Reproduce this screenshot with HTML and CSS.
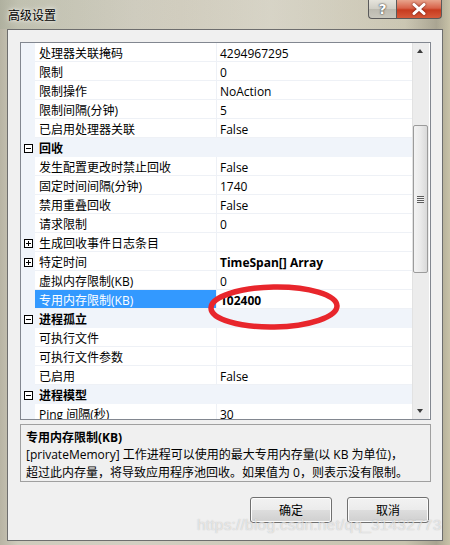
FILE: index.html
```html
<!DOCTYPE html>
<html>
<head>
<meta charset="utf-8">
<link rel="stylesheet" href="styles.css">
</head>
<body>
<div class="window">
  <div class="titlebar">
    <div class="title">高级设置</div>
    <div class="caption-btns">
      <div class="cbtn help">?</div>
      <div class="cbtn close">
        <svg width="16" height="12" viewBox="0 0 16 12"><path d="M3 1.5 L13 10.5 M13 1.5 L3 10.5" stroke="#fff" stroke-width="3" stroke-linecap="round"/><path d="M3 1.5 L13 10.5 M13 1.5 L3 10.5" stroke="#fff" stroke-width="2.2"/></svg>
      </div>
    </div>
  </div>
  <div class="client">
    <div class="grid">
      <div class="rows">
        <div class="row"><div class="gutter"></div><div class="name">处理器关联掩码</div><div class="value">4294967295</div></div>
        <div class="row"><div class="gutter"></div><div class="name">限制</div><div class="value">0</div></div>
        <div class="row"><div class="gutter"></div><div class="name">限制操作</div><div class="value">NoAction</div></div>
        <div class="row"><div class="gutter"></div><div class="name">限制间隔(分钟)</div><div class="value">5</div></div>
        <div class="row"><div class="gutter"></div><div class="name">已启用处理器关联</div><div class="value">False</div></div>
        <div class="row cat"><div class="gutter"><span class="box minus"></span></div><div class="cname">回收</div></div>
        <div class="row"><div class="gutter"></div><div class="name">发生配置更改时禁止回收</div><div class="value">False</div></div>
        <div class="row"><div class="gutter"></div><div class="name">固定时间间隔(分钟)</div><div class="value">1740</div></div>
        <div class="row"><div class="gutter"></div><div class="name">禁用重叠回收</div><div class="value">False</div></div>
        <div class="row"><div class="gutter"></div><div class="name">请求限制</div><div class="value">0</div></div>
        <div class="row"><div class="gutter"><span class="box plus"></span></div><div class="name">生成回收事件日志条目</div><div class="value"></div></div>
        <div class="row"><div class="gutter"><span class="box plus"></span></div><div class="name">特定时间</div><div class="value bold">TimeSpan[] Array</div></div>
        <div class="row"><div class="gutter"></div><div class="name">虚拟内存限制(KB)</div><div class="value">0</div></div>
        <div class="row"><div class="gutter"></div><div class="name selected">专用内存限制(KB)</div><div class="value bold">102400</div></div>
        <div class="row cat"><div class="gutter"><span class="box minus"></span></div><div class="cname">进程孤立</div></div>
        <div class="row"><div class="gutter"></div><div class="name">可执行文件</div><div class="value"></div></div>
        <div class="row"><div class="gutter"></div><div class="name">可执行文件参数</div><div class="value"></div></div>
        <div class="row"><div class="gutter"></div><div class="name">已启用</div><div class="value">False</div></div>
        <div class="row cat"><div class="gutter"><span class="box minus"></span></div><div class="cname">进程模型</div></div>
        <div class="row"><div class="gutter"></div><div class="name">Ping 间隔(秒)</div><div class="value">30</div></div>
        <svg class="ellipse" width="140" height="54" viewBox="0 0 140 54"><ellipse cx="70" cy="27" rx="63" ry="20" fill="none" stroke="#e8262c" stroke-width="5.5" transform="rotate(-1 70 27)"/></svg>
      </div>
      <div class="scrollbar">
        <div class="arrow up"></div>
        <div class="track">
          <div class="thumb"><div class="grip"></div></div>
        </div>
        <div class="arrow down"></div>
      </div>
    </div>
    <div class="desc">
      <div class="desc-title">专用内存限制(KB)</div>
      <div class="desc-text">[privateMemory] 工作进程可以使用的最大专用内存量(以 KB 为单位)，<br>超过此内存量，将导致应用程序池回收。如果值为 0，则表示没有限制。</div>
    </div>
    <div class="buttons">
      <div class="btn">确定</div>
      <div class="btn">取消</div>
    </div>
  </div>
  <div class="watermark">https://blog.csdn.net/qq_31432773</div>
</div>
</body>
</html>
```
FILE: styles.css
```css
* { box-sizing: border-box; }
html, body { margin: 0; padding: 0; }
body {
  width: 450px; height: 545px; overflow: hidden;
  font-family: "Open Sans", "Noto Sans CJK SC", sans-serif;
  font-size: 12px; color: #000;
}
.window {
  position: relative;
  width: 450px; height: 545px;
  padding: 0 7px 4px 7px;
  display: flex; flex-direction: column;
  background: linear-gradient(90deg, #b8b4a4 0%, #cfcbbc 4%, #d3cfc2 30%, #cdc9b8 60%, #c8c3ae 90%, #a8a390 97%, #c8c2a8 100%);
}
.titlebar {
  height: 29px; flex: none;
  display: flex; justify-content: space-between; align-items: flex-start;
  background: linear-gradient(90deg, rgba(160,170,150,0.35) 0%, rgba(200,196,180,0) 40%, rgba(230,228,220,0.4) 60%, rgba(200,196,180,0) 100%);
  margin: 0 -7px; padding: 0 8px 0 8px;
}
.title {
  margin-top: 8px; font-size: 12px; line-height: 16px; color: #000;
  text-shadow: 0 0 6px rgba(255,255,255,0.9), 0 0 3px rgba(255,255,255,0.8);
}
.caption-btns { display: flex; }
.cbtn {
  height: 19px; border: 1px solid #5a5a5a; border-top: none;
  display: flex; align-items: center; justify-content: center;
}
.help {
  width: 28px; border-radius: 0 0 0 4px; border-right: none;
  background: linear-gradient(#e6e4dc 0%, #cfcdc4 50%, #bcbab0 51%, #c8c6bc 100%);
  color: #fff; font-family: "DejaVu Sans", sans-serif; font-weight: bold; font-size: 14px;
  text-shadow: 0 0 1px #333, 0 0 2px #444;
}
.close {
  width: 46px; border-radius: 0 0 4px 0;
  background: linear-gradient(#e8a48c 0%, #d8634a 45%, #c73b1f 55%, #d65a3a 100%);
}
.close svg { filter: drop-shadow(0 0 1px #6a1a10); }
.client {
  flex: 1;
  background: #f0f0f0;
  border: 1px solid #6e6e6e;
  padding: 12px 11px 0 12px;
  display: flex; flex-direction: column;
}
.grid {
  height: 378px; flex: none;
  border: 1px solid #828790;
  background: #fff;
  display: flex;
}
.rows {
  position: relative;
  width: 391px; overflow: hidden;
}
.row { display: flex; height: 19px; flex: none; }
.gutter {
  width: 14px; flex: none; background: #f0f4fa;
  display: flex; align-items: center; justify-content: center;
  padding-left: 1px; padding-top: 1px;
}
.name {
  width: 182px; flex: none;
  border-right: 1px solid #eef1f6; border-bottom: 1px solid #eef1f6;
  padding: 3px 0 0 4px; line-height: 15px; white-space: nowrap;
}
.name.selected { background: #3399ff; color: #fff; }
.value {
  flex: 1; border-bottom: 1px solid #eef1f6;
  padding: 3px 0 0 3px; line-height: 15px; white-space: nowrap;
}
.bold { font-weight: bold; }
.cat { background: #f0f4fa; }
.cname {
  flex: 1; padding: 3px 0 0 4px; line-height: 15px; font-weight: bold;
  border-bottom: 1px solid #f0f4fa;
}
.box {
  width: 9px; height: 9px; border: 1px solid #000; background: #fff;
  position: relative; display: block;
}
.box::before {
  content: ""; position: absolute; left: 1px; top: 3px; width: 5px; height: 1px; background: #000;
}
.plus::after {
  content: ""; position: absolute; left: 3px; top: 1px; width: 1px; height: 5px; background: #000;
}
.ellipse { position: absolute; left: 183px; top: 237px; }
.scrollbar {
  width: 17px; flex: none;
  background: #ececec;
  border-left: 1px solid #e2e2e2;
  display: flex; flex-direction: column;
}
.arrow { height: 17px; flex: none; position: relative; }
.arrow::after {
  content: ""; position: absolute; left: 4px; width: 0; height: 0;
  border-left: 3.5px solid transparent; border-right: 3.5px solid transparent;
}
.up::after { top: 6px; border-bottom: 4px solid #3c3c3c; }
.down::after { top: 7px; border-top: 4px solid #3c3c3c; }
.track { flex: 1; position: relative; }
.thumb {
  position: absolute; left: 0; right: 1px; top: 65px; height: 148px;
  border: 1px solid #9b9b9b; border-radius: 2px;
  background: linear-gradient(90deg, #f3f3f3 0%, #eaeaea 50%, #d9d9d9 100%);
  display: flex; align-items: center; justify-content: center;
}
.grip {
  width: 7px; height: 7px;
  background: repeating-linear-gradient(#5c5c5c 0 1px, #f2f2f2 1px 2px);
}
.desc {
  margin-top: 4px; height: 58px; flex: none;
  border: 1px solid #a0a0a0;
  padding: 4px 5px;
}
.desc-title { font-weight: bold; line-height: 17px; }
.desc-text { line-height: 18px; white-space: nowrap; }
.buttons {
  margin-top: 15px;
  display: flex; justify-content: flex-end; gap: 15px;
  padding-right: 2px;
}
.btn {
  width: 82px; height: 26px;
  border: 1px solid #707070; border-radius: 3px;
  background: linear-gradient(#f2f2f2 0%, #ebebeb 50%, #dddddd 51%, #cfcfcf 100%);
  box-shadow: inset 0 0 0 1px #fcfcfc;
  display: flex; align-items: center; justify-content: center;
  line-height: 16px; padding-top: 1px;
}
.watermark {
  position: absolute; left: 197px; top: 516px;
  font-family: "Liberation Sans", sans-serif; font-size: 15.5px;
  color: rgba(255,255,255,0.6);
  text-shadow: 0 0 1px rgba(120,120,120,0.5);
  white-space: nowrap; letter-spacing: 0.2px;
}
```
